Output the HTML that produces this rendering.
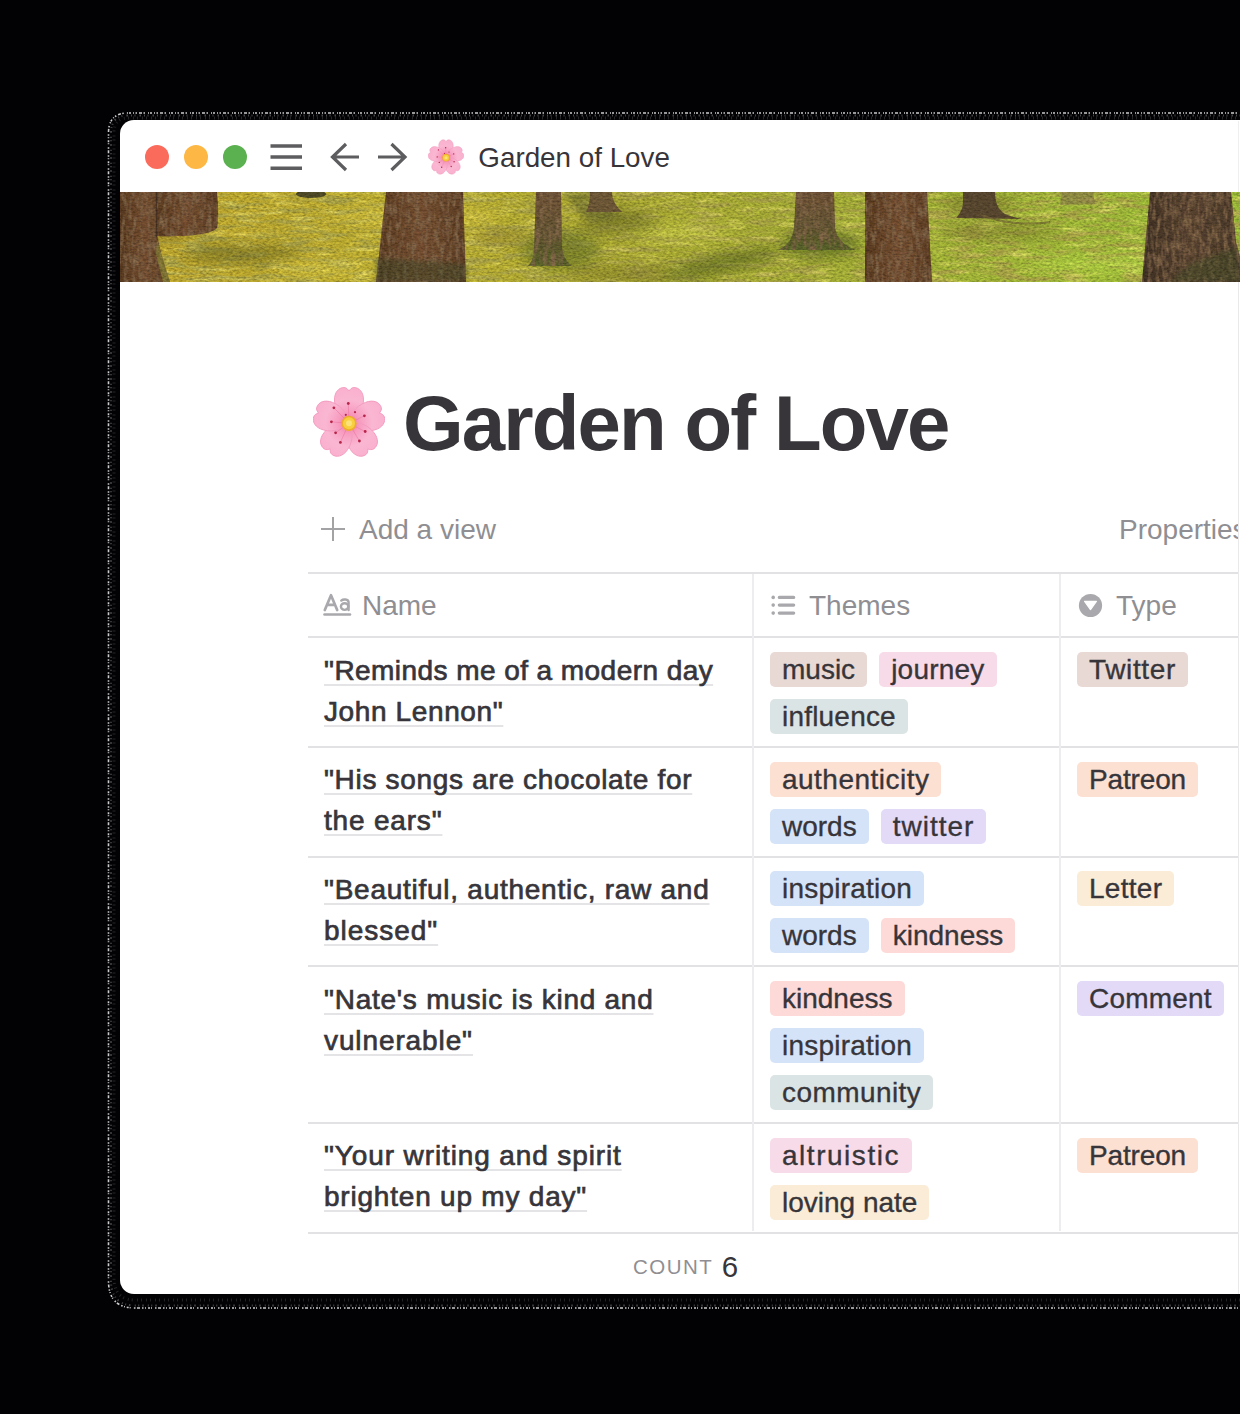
<!DOCTYPE html>
<html><head><meta charset="utf-8">
<style>
*{margin:0;padding:0;box-sizing:border-box}
html,body{width:1240px;height:1414px;overflow:hidden;background:#020104}
body{position:relative;font-family:"Liberation Sans",sans-serif;color:#37352f}
.abs{position:absolute}
.win{position:absolute;left:120px;top:120px;width:1120px;height:1174px;background:#fff;border-radius:14px 0 0 14px;overflow:hidden}
.tl{position:absolute;width:24px;height:24px;border-radius:50%;top:25px}
.t{position:absolute;white-space:nowrap;line-height:1}
.hline{position:absolute;left:188px;width:930px;height:2px;background:#e2e1e4}
.vline{position:absolute;width:2px;background:#edecef}
.name{position:absolute;left:204px;font-size:28px;line-height:41px;color:#37353a;letter-spacing:0.45px;-webkit-text-stroke:0.7px #37353a;white-space:nowrap}
.name span{text-decoration:underline;text-decoration-color:#e4e3e6;text-decoration-thickness:2px;text-underline-offset:4px;text-decoration-skip-ink:none}
.tagline{position:absolute;left:650px;height:35px;white-space:nowrap;display:flex;gap:12px}
.tag{display:block;height:35px;border-radius:5px;font-size:28px;line-height:35px;padding:0 12px;color:#37353a;-webkit-text-stroke:0.35px #37353a}
.brown{background:#e9d9d5}
.pink{background:#f8dbe8}
.gray{background:#dbe4e4}
.orange{background:#fce0d2}
.blue{background:#d5e3f8}
.purple{background:#e2daf7}
.red{background:#fddad7}
.yellow{background:#faecd6}
.hd{position:absolute;top:469.5px;font-size:28px;color:#8f8e92}
</style></head><body>
<svg class="abs" style="left:0;top:0" width="1240" height="1414">
 <path d="M1250 113H128Q108.5 113 108.5 133V1281Q108.5 1308 135 1308H1250" fill="none" stroke="#fff" stroke-width="1.6" stroke-dasharray="1.5 1.5 1 2 2 1 1 3 1.5 1.5 3 2" opacity="0.8"/>
 <path d="M1250 115.5H128Q111 115.5 111 133V1280Q111 1305.5 135 1305.5H1250" fill="none" stroke="#9a9a9a" stroke-width="2" stroke-dasharray="1 3 1.5 4 1 2.5" opacity="0.45"/>
 <path d="M1250 118H128Q114 118 114 133V1278Q114 1300 135 1300H1250" fill="none" stroke="#666" stroke-width="3" stroke-dasharray="1 4 1 3" opacity="0.35"/>
</svg>
<div class="win">
  <div class="tl" style="left:25px;background:#fb6b5b"></div>
  <div class="tl" style="left:64px;background:#fdb744"></div>
  <div class="tl" style="left:103px;background:#5bb04f"></div>
  <svg class="abs" style="left:0;top:0" width="320" height="72" viewBox="0 0 320 72">
    <g stroke="#5d5c5f" stroke-width="3.4" fill="none">
      <path d="M150.5 26H182M150.5 37H182M150.5 48.3H182"/>
      <path d="M239 37H212M226 24L212.5 37L226 50" stroke-width="3.2"/>
      <path d="M258 37H285M271.5 24L285 37L271.5 50" stroke-width="3.2"/>
    </g>
  </svg>
  <svg class="abs" style="left:308px;top:19px" width="36" height="36" viewBox="0 0 72 72"><defs>
 <radialGradient id="pga" cx="36" cy="37" r="36" gradientUnits="userSpaceOnUse">
  <stop offset="0" stop-color="#f0709f"/>
  <stop offset="0.3" stop-color="#f79cc0"/>
  <stop offset="0.65" stop-color="#fab7d2"/>
  <stop offset="1" stop-color="#f9b0ce"/>
 </radialGradient>
 <path id="pta" d="M36 37C29 34 22 26 21.5 15C21 6 26 1.5 31 1.5C33.5 1.5 35 3.5 36 5C37 3.5 38.5 1.5 41 1.5C46 1.5 51 6 50.5 15C50 26 43 34 36 37Z"/>
</defs>
<g fill="url(#pga)" stroke="#f39bbf" stroke-width="0.9">
 <use href="#pta"/>
 <use href="#pta" transform="rotate(72 36 37)"/>
 <use href="#pta" transform="rotate(144 36 37)"/>
 <use href="#pta" transform="rotate(216 36 37)"/>
 <use href="#pta" transform="rotate(288 36 37)"/>
</g>
<g stroke="#e2628f" stroke-width="0.7" opacity="0.55"><path d="M36 37.3L35.3 17.5M36 37.3L20.9 21.8M36 37.3L51.4 29.8M36 37.3L18.4 35.8M36 37.3L52.2 45.5M36 37.3L46.4 55M36 37.3L27.4 56.4M36 37.3L22.6 46.8"/></g>
<g fill="#b8254a"><circle cx="35.3" cy="17.5" r="1.4"/><circle cx="20.9" cy="21.8" r="1.4"/><circle cx="51.4" cy="29.8" r="1.4"/><circle cx="18.4" cy="35.8" r="1.4"/><circle cx="52.2" cy="45.5" r="1.4"/><circle cx="46.4" cy="55" r="1.4"/><circle cx="27.4" cy="56.4" r="1.4"/><circle cx="22.6" cy="46.8" r="1.4"/><circle cx="42" cy="26.2" r="1.1"/><circle cx="32.8" cy="28.8" r="1.1"/></g>
<circle cx="36" cy="37.3" r="7.6" fill="#eeac2e"/>
<circle cx="36" cy="37.3" r="6" fill="#f7cf3f"/>
<circle cx="36" cy="37.3" r="3" fill="#fbe27a"/>
</svg>
  <div class="t" style="left:358.3px;top:24.2px;font-size:27.8px;color:#37353a">Garden of Love</div>
  <svg class="abs" style="left:0;top:72px" width="1120" height="90" viewBox="0 0 1120 90">
<defs>
 <linearGradient id="moss" x1="0" y1="0" x2="1" y2="0">
  <stop offset="0" stop-color="#b9a22e"/>
  <stop offset="0.28" stop-color="#b5a830"/>
  <stop offset="0.45" stop-color="#a6a532"/>
  <stop offset="0.62" stop-color="#9fa634"/>
  <stop offset="0.8" stop-color="#9cb136"/>
  <stop offset="1" stop-color="#96b436"/>
 </linearGradient>
 <filter id="grain" x="0" y="0" width="100%" height="100%">
  <feTurbulence type="fractalNoise" baseFrequency="0.3 0.55" numOctaves="2" seed="7" result="n"/>
  <feColorMatrix in="n" type="matrix" values="1 0 0 0 0  1 0 0 0 0  1 0 0 0 0  0 0 0 0 1" result="g"/>
  <feComposite in="SourceGraphic" in2="g" operator="arithmetic" k1="1.3" k2="0.35" k3="0" k4="0"/>
 </filter>
 <filter id="streak" x="0" y="0" width="100%" height="100%">
  <feTurbulence type="fractalNoise" baseFrequency="0.03 0.18" numOctaves="3" seed="11" result="n"/>
  <feColorMatrix in="n" type="matrix" values="0 0 0 0 0.36  0 0 0 0 0.33  0 0 0 0 0.06  -4.2 0 0 0 2.3"/>
 </filter>
 <filter id="hilite" x="0" y="0" width="100%" height="100%">
  <feTurbulence type="fractalNoise" baseFrequency="0.035 0.2" numOctaves="3" seed="5" result="n"/>
  <feColorMatrix in="n" type="matrix" values="0 0 0 0 0.86  0 0 0 0 0.78  0 0 0 0 0.18  3.5 0 0 0 -1.9"/>
 </filter>
 <filter id="bark" x="0" y="0" width="100%" height="100%">
  <feTurbulence type="fractalNoise" baseFrequency="0.25 0.08" numOctaves="2" seed="3" result="n"/>
  <feColorMatrix in="n" type="matrix" values="0 0 0 0 0.2  0 0 0 0 0.12  0 0 0 0 0.06  -2.5 0 0 0 1.5" result="d"/>
  <feComposite in="d" in2="SourceGraphic" operator="in" result="dd"/>
  <feMerge><feMergeNode in="SourceGraphic"/><feMergeNode in="dd"/></feMerge>
 </filter>
 <filter id="blur6"><feGaussianBlur stdDeviation="6"/></filter>
 <filter id="blur2"><feGaussianBlur stdDeviation="2"/></filter>
 <filter id="blur1"><feGaussianBlur stdDeviation="0.7"/></filter>
 <linearGradient id="tr" x1="0" y1="0" x2="1" y2="0">
  <stop offset="0" stop-color="#56381f"/>
  <stop offset="0.5" stop-color="#704b2f"/>
  <stop offset="1" stop-color="#5a3c24"/>
 </linearGradient>
 <linearGradient id="trd" x1="0" y1="0" x2="1" y2="0">
  <stop offset="0" stop-color="#3d2f24"/>
  <stop offset="0.5" stop-color="#55402f"/>
  <stop offset="1" stop-color="#463629"/>
 </linearGradient>
 <linearGradient id="trm" x1="0" y1="0" x2="0" y2="1">
  <stop offset="0" stop-color="#6a4f34"/>
  <stop offset="0.6" stop-color="#5f5230"/>
  <stop offset="1" stop-color="#556028"/>
 </linearGradient>
</defs>
<g filter="url(#grain)">
<rect width="1120" height="90" fill="url(#moss)"/>
<rect width="1120" height="90" filter="url(#streak)" opacity="0.9"/>
<rect width="1120" height="90" filter="url(#hilite)" opacity="0.5"/>
<g filter="url(#blur6)" opacity="0.6">
 <ellipse cx="120" cy="62" rx="60" ry="10" fill="#6f6a22"/>
 <ellipse cx="440" cy="58" rx="40" ry="20" fill="#5e6a22"/>
 <ellipse cx="520" cy="82" rx="70" ry="8" fill="#7b7628"/>
 <ellipse cx="600" cy="72" rx="60" ry="10" fill="#55621e" transform="rotate(-12 600 72)"/>
 <ellipse cx="700" cy="52" rx="40" ry="14" fill="#4e5e1e"/>
 <ellipse cx="500" cy="30" rx="40" ry="14" fill="#6a6a24"/>
 <ellipse cx="880" cy="40" rx="60" ry="8" fill="#7a7a2c"/>
 <ellipse cx="860" cy="12" rx="40" ry="8" fill="#76702a"/>
 <ellipse cx="380" cy="45" rx="30" ry="6" fill="#8a7a30"/>
 <ellipse cx="40" cy="40" rx="30" ry="8" fill="#7a6a28"/>
</g>
<g filter="url(#blur6)" opacity="0.4">
 <ellipse cx="300" cy="25" rx="80" ry="10" fill="#e0cc48"/>
 <ellipse cx="560" cy="40" rx="50" ry="8" fill="#cfd44e"/>
 <ellipse cx="980" cy="72" rx="70" ry="10" fill="#b8dc48"/>
 <ellipse cx="200" cy="76" rx="50" ry="8" fill="#dccc48"/>
</g>
<g filter="url(#bark)">
<path d="M34 0H97C98 12 99 26 97 36C92 42 70 45 36 44Z" fill="url(#tr)"/>
<path d="M0 0H37L37 42C40 60 46 78 50 90H0Z" fill="url(#tr)"/>
<path d="M266 0H343L346 90H256Z" fill="url(#tr)"/>
<path d="M745 0H807L812 90H745Z" fill="url(#tr)"/>
<path d="M1030 0H1111L1116 50L1120 65V90H1022Z" fill="url(#trd)"/>
<path d="M416 0H441L442 55C443 64 447 70 452 74L408 74C412 70 414 64 414 55Z" fill="url(#trm)"/>
<path d="M676 0H714L715 35C716 46 724 54 736 58L658 58C668 54 673 46 674 35Z" fill="url(#trm)"/>
</g>
<path d="M37 48L50 90H43L36 62Z" fill="#8a8a35" opacity="0.6" filter="url(#blur1)"/><path d="M36.5 0V45" stroke="#3a2a1e" stroke-width="1.5" opacity="0.8"/>
<ellipse cx="191" cy="2" rx="15" ry="4" fill="#4d4a25" filter="url(#blur1)"/>
<path d="M256 66L346 72V90H256Z" fill="#3e4526" opacity="0.5" filter="url(#blur2)"/>
<path d="M441 0C450 8 455 20 470 28C480 30 492 30 500 26C490 18 482 10 478 0Z" fill="#6a6a2e" opacity="0.6" filter="url(#blur2)"/><path d="M470 0H492C492 8 496 14 502 20L466 20C469 14 470 8 470 0Z" fill="#6a5534" filter="url(#blur1)"/>
<path d="M843 0H875C875 10 878 18 885 22C892 25 898 26 902 27L836 26C840 22 843 16 843 10Z" fill="#57452d" filter="url(#blur1)"/><path d="M860 22C875 30 905 34 930 30" stroke="#6b5a34" stroke-width="2" fill="none" opacity="0.6"/>
<path d="M942 0H973L975 12L940 13Z" fill="#857845" opacity="0.7" filter="url(#blur1)"/>
<path d="M1070 72L1116 55L1120 90H1050Z" fill="#3f4a25" opacity="0.5" filter="url(#blur2)"/>
</g>
</svg>
  <svg class="abs" style="left:193px;top:266px" width="72" height="72" viewBox="0 0 72 72"><defs>
 <radialGradient id="pgb" cx="36" cy="37" r="36" gradientUnits="userSpaceOnUse">
  <stop offset="0" stop-color="#f0709f"/>
  <stop offset="0.3" stop-color="#f79cc0"/>
  <stop offset="0.65" stop-color="#fab7d2"/>
  <stop offset="1" stop-color="#f9b0ce"/>
 </radialGradient>
 <path id="ptb" d="M36 37C29 34 22 26 21.5 15C21 6 26 1.5 31 1.5C33.5 1.5 35 3.5 36 5C37 3.5 38.5 1.5 41 1.5C46 1.5 51 6 50.5 15C50 26 43 34 36 37Z"/>
</defs>
<g fill="url(#pgb)" stroke="#f39bbf" stroke-width="0.9">
 <use href="#ptb"/>
 <use href="#ptb" transform="rotate(72 36 37)"/>
 <use href="#ptb" transform="rotate(144 36 37)"/>
 <use href="#ptb" transform="rotate(216 36 37)"/>
 <use href="#ptb" transform="rotate(288 36 37)"/>
</g>
<g stroke="#e2628f" stroke-width="0.7" opacity="0.55"><path d="M36 37.3L35.3 17.5M36 37.3L20.9 21.8M36 37.3L51.4 29.8M36 37.3L18.4 35.8M36 37.3L52.2 45.5M36 37.3L46.4 55M36 37.3L27.4 56.4M36 37.3L22.6 46.8"/></g>
<g fill="#b8254a"><circle cx="35.3" cy="17.5" r="1.4"/><circle cx="20.9" cy="21.8" r="1.4"/><circle cx="51.4" cy="29.8" r="1.4"/><circle cx="18.4" cy="35.8" r="1.4"/><circle cx="52.2" cy="45.5" r="1.4"/><circle cx="46.4" cy="55" r="1.4"/><circle cx="27.4" cy="56.4" r="1.4"/><circle cx="22.6" cy="46.8" r="1.4"/><circle cx="42" cy="26.2" r="1.1"/><circle cx="32.8" cy="28.8" r="1.1"/></g>
<circle cx="36" cy="37.3" r="7.6" fill="#eeac2e"/>
<circle cx="36" cy="37.3" r="6" fill="#f7cf3f"/>
<circle cx="36" cy="37.3" r="3" fill="#fbe27a"/>
</svg>
  <div class="t" style="left:283px;top:264px;font-size:78px;font-weight:bold;letter-spacing:-1.9px;color:#37353a">Garden of Love</div>
  <svg class="abs" style="left:201px;top:397px" width="24" height="24" viewBox="0 0 24 24"><path d="M12 0V24M0 12H24" stroke="#a3a2a5" stroke-width="2"/></svg>
  <div class="t" style="left:239px;top:396px;font-size:28px;color:#8f8e92">Add a view</div>
  <div class="t" style="left:999px;top:396px;font-size:28px;color:#8f8e92">Properties</div>
  <div class="abs" style="left:1118px;top:0;width:2px;height:72px;background:#fff"></div>
  <div class="abs" style="left:1118px;top:1px;width:1px;height:71px;background:#efeef1"></div>
  <div class="abs" style="left:1118px;top:162px;width:2px;height:1012px;background:#fff"></div>
  <div class="abs" style="left:1118px;top:162px;width:1px;height:1012px;background:#e9e8eb"></div>
  <div class="hline" style="top:452px"></div>
<div class="hline" style="top:516px"></div>
<div class="hline" style="top:626px"></div>
<div class="hline" style="top:736px"></div>
<div class="hline" style="top:845px"></div>
<div class="hline" style="top:1002px"></div>
<div class="hline" style="top:1112px"></div>
  <div class="vline" style="left:632px;top:454px;height:657px"></div>
  <div class="vline" style="left:939px;top:454px;height:657px"></div>
  <svg class="abs" style="left:200px;top:470px" width="36" height="30" viewBox="200 470 36 30">
   <g fill="none" stroke="#a9a8ac" stroke-linecap="round" stroke-linejoin="round">
    <path d="M204.8 490L211 475.2L217.2 490M207.2 484.8H214.8" stroke-width="2.7"/>
    <ellipse cx="224.6" cy="486.6" rx="3.7" ry="3.3" stroke-width="2.4"/>
    <path d="M221.3 480.6C223 479 228.5 478.8 228.6 482.5V490" stroke-width="2.4"/>
    <path d="M204.5 494.5H230" stroke-width="2.6"/>
   </g>
  </svg>
  <div class="hd" style="left:242px">Name</div>
  <svg class="abs" style="left:648px;top:472px" width="30" height="26" viewBox="648 472 30 26">
   <g fill="#a9a8ac"><circle cx="653.2" cy="477.4" r="1.8"/><circle cx="653.2" cy="485.1" r="1.8"/><circle cx="653.2" cy="493.1" r="1.8"/></g>
   <g stroke="#a9a8ac" stroke-width="3.2" stroke-linecap="round"><path d="M659.3 477.4H673.7M659.3 485.1H673.7M659.3 493.1H673.7"/></g>
  </svg>
  <div class="hd" style="left:689px">Themes</div>
  <svg class="abs" style="left:956px;top:471px" width="30" height="30" viewBox="956 471 30 30">
   <circle cx="970.5" cy="485.5" r="11.6" fill="#a9a8ac"/>
   <path d="M964.6 481.3H976.4L970.5 489.6Z" fill="#fff" stroke="#fff" stroke-width="1.2" stroke-linejoin="round"/>
  </svg>
  <div class="hd" style="left:996px">Type</div>
<div class="name" style="top:529.8px"><span style="letter-spacing:0.44px">"Reminds me of a modern day</span><br><span style="letter-spacing:0.62px">John Lennon"</span></div>
<div class="tagline" style="top:532.1px"><span class="tag brown">music</span><span class="tag pink" style="letter-spacing:0.229px">journey</span></div>
<div class="tagline" style="top:579.1px"><span class="tag gray" style="letter-spacing:0.200px">influence</span></div>
<div class="tagline" style="left:957px;top:532.1px"><span class="tag brown" style="letter-spacing:0.629px">Twitter</span></div>
<div class="name" style="top:639.4px"><span style="letter-spacing:0.68px">"His songs are chocolate for</span><br><span style="letter-spacing:0.81px">the ears"</span></div>
<div class="tagline" style="top:641.7px"><span class="tag orange" style="letter-spacing:0.483px">authenticity</span></div>
<div class="tagline" style="top:688.7px"><span class="tag blue">words</span><span class="tag purple" style="letter-spacing:1.000px">twitter</span></div>
<div class="tagline" style="left:957px;top:641.7px"><span class="tag orange" style="letter-spacing:-0.157px">Patreon</span></div>
<div class="name" style="top:749.1px"><span style="letter-spacing:0.74px">"Beautiful, authentic, raw and</span><br><span style="letter-spacing:0.96px">blessed"</span></div>
<div class="tagline" style="top:751.4px"><span class="tag blue" style="letter-spacing:0.227px">inspiration</span></div>
<div class="tagline" style="top:798.4px"><span class="tag blue">words</span><span class="tag red">kindness</span></div>
<div class="tagline" style="left:957px;top:751.4px"><span class="tag yellow" style="letter-spacing:0.283px">Letter</span></div>
<div class="name" style="top:858.7px"><span style="letter-spacing:0.74px">"Nate's music is kind and</span><br><span style="letter-spacing:0.89px">vulnerable"</span></div>
<div class="tagline" style="top:861.0px"><span class="tag red">kindness</span></div>
<div class="tagline" style="top:908.0px"><span class="tag blue" style="letter-spacing:0.227px">inspiration</span></div>
<div class="tagline" style="top:955.0px"><span class="tag gray" style="letter-spacing:0.433px">community</span></div>
<div class="tagline" style="left:957px;top:861.0px"><span class="tag purple" style="letter-spacing:0.200px">Comment</span></div>
<div class="name" style="top:1015.2px"><span style="letter-spacing:0.88px">"Your writing and spirit</span><br><span style="letter-spacing:0.79px">brighten up my day"</span></div>
<div class="tagline" style="top:1017.5px"><span class="tag pink" style="letter-spacing:1.530px">altruistic</span></div>
<div class="tagline" style="top:1064.5px"><span class="tag yellow">loving nate</span></div>
<div class="tagline" style="left:957px;top:1017.5px"><span class="tag orange" style="letter-spacing:-0.157px">Patreon</span></div>
  <div class="t" style="left:513px;top:1136.5px;font-size:20.5px;letter-spacing:1.5px;color:#8f8e92">COUNT</div>
  <div class="t" style="left:601.8px;top:1132px;font-size:29.5px;color:#37353a">6</div>
</div>
</body></html>
